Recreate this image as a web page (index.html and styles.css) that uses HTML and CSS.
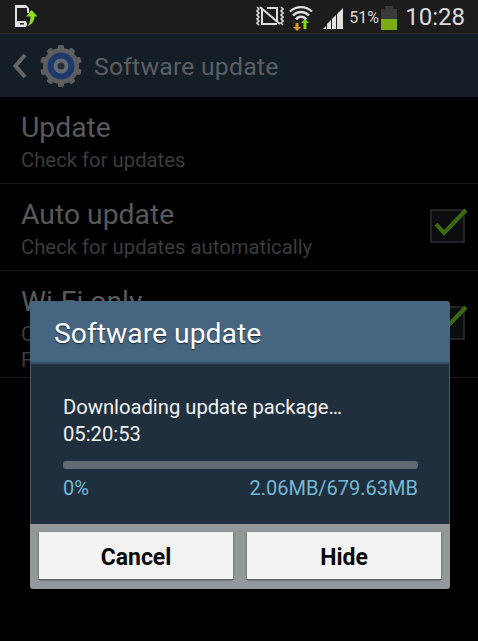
FILE: index.html
```html
<!DOCTYPE html>
<html lang="en">
<head>
<meta charset="utf-8">
<title>Software update</title>
<link rel="stylesheet" href="styles.css">
</head>
<body>
<div class="screen">
  <header class="status">
    <svg class="ic-dl" viewBox="0 0 24 22" width="24" height="22">
      <path fill-rule="evenodd" d="M1 0h11l3 3v5h-2V3H3v13h9v1l1 1v2l-1 2H1zM6 18h4v1.600H6z" fill="#e2e2e2"/>
      <path d="M17.500 5l6 6.500h-3c0 4.500-2.500 8-7 9.500 2-2.500 3-5.500 3-9.500h-4.500z" fill="#8ce01e"/>
    </svg>
    <div class="status-right">
      <svg class="ic-mute" viewBox="0 0 28 20" width="28" height="20">
        <path d="M1 1l2 2-2 2 2 2-2 2 2 2-2 2 2 2-2 2 2 2M25 1l2 2-2 2 2 2-2 2 2 2-2 2 2 2-2 2 2 2" fill="none" stroke="#d8d8d8" stroke-width="1.600"/>
        <path d="M6 3v15h15M11 2h10v13M4 1l20 17" fill="none" stroke="#dedede" stroke-width="2"/>
      </svg>
      <svg class="ic-wifi" viewBox="0 0 24 26" width="24" height="26">
        <path d="M1 6.500a16 16 0 0 1 22 0M4 10.500a11 11 0 0 1 16 0M7 14.500a6 6 0 0 1 10 0" fill="none" stroke="#e0e0e0" stroke-width="2.400"/>
        <path d="M6.500 18h3v4H12l-4 4-4-4h2.500z" fill="#e2902c"/>
        <path d="M14.500 24v-6H12l4-4 4 4h-2.500v6z" fill="#7fd61c"/>
      </svg>
      <svg class="ic-signal" viewBox="0 0 21 21" width="21" height="21">
        <path d="M0 21l3-3v3zM4 21v-5l4-4v9zM9 21V11l4-4v14zM14 21V6l6-6v21z" fill="#e0e0e0"/>
      </svg>
      <span class="pct">51%</span>
      <svg class="ic-batt" viewBox="0 0 16 24" width="16" height="24">
        <path d="M4 0h8v3h4v21H0V3h4z" fill="#3a3a3a"/>
        <rect y="13" width="16" height="11" fill="#79ad14"/>
      </svg>
      <span class="clock">10:28</span>
    </div>
  </header>
  <div class="actionbar">
    <svg class="ic-back" viewBox="0 0 15 26" width="15" height="26">
      <path d="M13 2L3.500 13 13 24" fill="none" stroke="#666" stroke-width="4"/>
    </svg>
    <svg class="ic-gear" viewBox="0 0 44 44" width="44" height="44">
      <circle cx="22" cy="22" r="18" fill="#5e5e5e"/>
      <g fill="#5e5e5e">
        <rect x="19" y="1" width="6" height="42" rx="1.500"/>
        <rect x="19" y="1" width="6" height="42" rx="1.500" transform="rotate(36 22 22)"/>
        <rect x="19" y="1" width="6" height="42" rx="1.500" transform="rotate(72 22 22)"/>
        <rect x="19" y="1" width="6" height="42" rx="1.500" transform="rotate(108 22 22)"/>
        <rect x="19" y="1" width="6" height="42" rx="1.500" transform="rotate(144 22 22)"/>
      </g>
      <circle cx="22" cy="22" r="13.500" fill="#1e3a6c"/>
      <circle cx="22" cy="22" r="7.500" fill="#646b72"/>
      <circle cx="22" cy="22" r="3.500" fill="#27303a"/>
    </svg>
    <h1 class="bar-title">Software update</h1>
  </div>
  <main class="list">
    <div class="row row-a">
      <div class="row-text">
        <div class="row-title">Update</div>
        <div class="row-sub">Check for updates</div>
      </div>
    </div>
    <div class="row row-b">
      <div class="row-text">
        <div class="row-title">Auto update</div>
        <div class="row-sub">Check for updates automatically</div>
      </div>
      <svg class="check" viewBox="0 0 38 36" width="38" height="36">
        <rect x="1" y="3" width="33" height="32" fill="#0c0d0e" stroke="#2b2e30" stroke-width="1.500"/>
        <path d="M6 17l8 9L36 3" fill="none" stroke="#3b6a12" stroke-width="4"/>
      </svg>
    </div>
    <div class="row row-c">
      <div class="row-text">
        <div class="row-title">Wi-Fi only</div>
        <div class="row-sub">Check for updates only when<br>Free Wi-Fi is connected</div>
      </div>
      <svg class="check" viewBox="0 0 38 36" width="38" height="36">
        <rect x="1" y="3" width="33" height="32" fill="#0c0d0e" stroke="#2b2e30" stroke-width="1.500"/>
        <path d="M6 17l8 9L36 3" fill="none" stroke="#3b6a12" stroke-width="4"/>
      </svg>
    </div>
  </main>
  <section class="dialog">
    <h2 class="dlg-title">Software update</h2>
    <div class="dlg-body">
      <p class="dlg-msg">Downloading update package…<br>05:20:53</p>
      <div class="progress"></div>
      <div class="dlg-stats"><span>0%</span><span>2.06MB/679.63MB</span></div>
    </div>
    <div class="dlg-foot">
      <button class="btn">Cancel</button>
      <button class="btn">Hide</button>
    </div>
  </section>
</div>
</body>
</html>
```
FILE: styles.css
```css
html, body { margin: 0; padding: 0; background: #000; }
.screen {
  position: relative;
  width: 478px;
  height: 641px;
  overflow: hidden;
  background: #000;
  font-family: Roboto, "Liberation Sans", sans-serif;
}
.status {
  height: 33px;
  box-sizing: border-box;
  background: #1c1c1c;
  display: flex;
  align-items: center;
  justify-content: space-between;
  padding: 0 13px 0 14px;
}
.ic-dl { margin-top: -1px; margin-left: 0; }
.status-right { display: flex; align-items: center; }
.ic-mute { margin-right: 5px; margin-top: -1px; }
.ic-wifi { margin-right: 10px; margin-top: 2px; }
.ic-signal { margin-right: 5px; margin-top: 3px; }
.pct { color: #d8d8d8; font-size: 16px; width: 32px; margin-top: 1px; }
.ic-batt { margin-right: 8px; margin-top: 3px; }
.clock { color: #dcdcdc; font-size: 24px; line-height: 30px; margin-top: 1px; }
.actionbar {
  height: 64px;
  box-sizing: border-box;
  background: #141e27;
  border-top: 1px solid #1d2a35;
  display: flex;
  align-items: center;
  padding-left: 12px;
}
.ic-back { margin-right: 12px; }
.ic-gear { margin-right: 11px; }
.bar-title { margin: 2px 0 0; font-size: 24.800px; font-weight: 400; color: #5c5f61; letter-spacing: 0.2px; }
.row {
  box-sizing: border-box;
  display: flex;
  align-items: flex-start;
  justify-content: space-between;
  padding: 14px 10px 0 21px;
  border-bottom: 1px solid #1a1a1a;
}
.row-a { height: 87px; }
.row-b { height: 87px; }
.row-c { height: 107px; }
.row-title { font-size: 28.300px; line-height: 33px; color: #58595a; }
.row-sub { font-size: 20.300px; line-height: 26px; color: #3a3c3d; margin-top: 3px; }
.check { margin-top: 9px; }
.row-c .check { margin-top: 19px; }
.dialog {
  position: absolute;
  left: 30px;
  top: 301px;
  width: 420px;
  height: 288px;
  border-radius: 3px;
  overflow: hidden;
  display: flex;
  flex-direction: column;
}
.dlg-title {
  margin: 0;
  height: 63px;
  box-sizing: border-box;
  background: #466580;
  border-bottom: 2px solid #37506a;
  padding-left: 24px;
  font-size: 28.300px;
  line-height: 65px;
  font-weight: 400;
  color: #fff;
  text-shadow: 0 1px 1px #1c2a38;
}
.dlg-body {
  flex: 1;
  background: #1f2f3e;
  border-left: 1px solid #4a5560;
  border-right: 1px solid #4a5560;
  padding: 30px 31px 0 32px;
}
.dlg-msg { margin: 0; font-size: 20.200px; line-height: 27px; color: #f2f2f2; }
.progress { height: 8px; background: #5f6a72; border-radius: 3px; margin-top: 13px; }
.dlg-stats {
  display: flex;
  justify-content: space-between;
  margin-top: 5px;
  font-size: 20px;
  line-height: 28px;
  color: #74b9d6;
}
.dlg-foot {
  height: 65px;
  box-sizing: border-box;
  background: #93989b;
  display: flex;
  gap: 14px;
  padding: 8px 9px 0;
}
.btn {
  flex: 1;
  height: 47px;
  border: 0;
  padding: 3px 0 0;
  background: #f3f3f3;
  box-shadow: 0 1px 2px #44484b;
  font-family: Roboto, "Liberation Sans", sans-serif;
  font-size: 23px;
  font-weight: 700;
  color: #0a0a0a;
}
```
